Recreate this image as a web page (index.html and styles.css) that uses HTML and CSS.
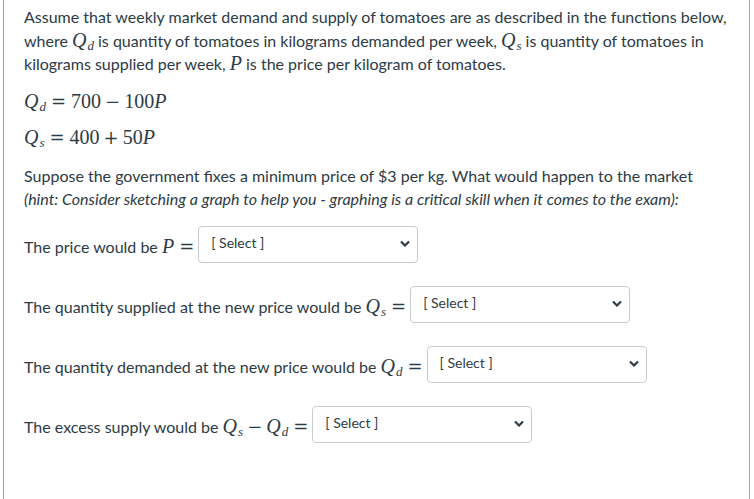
FILE: index.html
```html
<!DOCTYPE html>
<html>
<head>
<meta charset="utf-8">
<link rel="stylesheet" href="styles.css">
</head>
<body>
<div class="card">
  <p class="text">Assume that weekly market demand and supply of tomatoes are as described in the functions below, where <span class="m"><i>Q</i><sub><i>d</i></sub></span> is quantity of tomatoes in kilograms demanded per week, <span class="m"><i>Q</i><sub><i>s</i></sub></span> is quantity of tomatoes in kilograms supplied per week, <span class="m"><i>P</i></span> is the price per kilogram of tomatoes.</p>
  <p class="eq m"><i>Q</i><sub><i>d</i></sub><span class="rel">=</span>700<span class="bin">−</span>100<i>P</i></p>
  <p class="eq m"><i>Q</i><sub><i>s</i></sub><span class="rel">=</span>400<span class="bin">+</span>50<i>P</i></p>
  <p class="text q">Suppose the government fixes a minimum price of $3 per kg. What would happen to the market<br><em>(hint: Consider sketching a graph to help you - graphing is a critical skill when it comes to the exam):</em></p>
  <div class="row first">
    <span class="label">The price would be <span class="m"><i>P</i><span class="rel">=</span></span></span>
    <div class="select"><span class="ph">[ Select ]</span><svg width="10" height="7" viewBox="0 0 10 7"><path d="M1 1.5 L5 5.5 L9 1.5" fill="none" stroke="#2d3b45" stroke-width="2.2"/></svg></div>
  </div>
  <div class="row">
    <span class="label">The quantity supplied at the new price would be <span class="m"><i>Q</i><sub><i>s</i></sub><span class="rel">=</span></span></span>
    <div class="select"><span class="ph">[ Select ]</span><svg width="10" height="7" viewBox="0 0 10 7"><path d="M1 1.5 L5 5.5 L9 1.5" fill="none" stroke="#2d3b45" stroke-width="2.2"/></svg></div>
  </div>
  <div class="row">
    <span class="label">The quantity demanded at the new price would be <span class="m"><i>Q</i><sub><i>d</i></sub><span class="rel">=</span></span></span>
    <div class="select"><span class="ph">[ Select ]</span><svg width="10" height="7" viewBox="0 0 10 7"><path d="M1 1.5 L5 5.5 L9 1.5" fill="none" stroke="#2d3b45" stroke-width="2.2"/></svg></div>
  </div>
  <div class="row">
    <span class="label">The excess supply would be <span class="m"><i>Q</i><sub><i>s</i></sub><span class="bin">−</span><i>Q</i><sub><i>d</i></sub><span class="rel">=</span></span></span>
    <div class="select"><span class="ph">[ Select ]</span><svg width="10" height="7" viewBox="0 0 10 7"><path d="M1 1.5 L5 5.5 L9 1.5" fill="none" stroke="#2d3b45" stroke-width="2.2"/></svg></div>
  </div>
</div>
</body>
</html>
```

FILE: styles.css
```css
html, body {
  margin: 0;
  padding: 0;
  background: #fff;
}
body {
  font-family: Lato, "Open Sans", sans-serif;
  color: #2d3b45;
  font-size: 16px;
}
.card {
  margin-left: 3px;
  width: 724px;
  height: 475px;
  border: 1px solid #a5a5a5;
  border-top: none;
  padding: 5px 1px 20px 20px;
}
.text {
  margin: 0;
  line-height: 23.5px;
}
.m {
  font-family: "Liberation Serif", "DejaVu Serif", serif;
  font-size: 20px;
  line-height: 1;
  white-space: nowrap;
}
.m i {
  font-style: italic;
}
.m sub {
  font-size: 13px;
  vertical-align: -3px;
  line-height: 0;
  margin-left: 1px;
}
.rel, .bin {
  font-family: "DejaVu Serif", serif;
  font-size: 18px;
}
.rel {
  margin: 0 5px;
}
.bin {
  margin: 0 4px;
}
.eq {
  margin: 13px 0 0;
  line-height: 24px;
}
.eq + .eq {
  margin-top: 11px;
}
.q {
  margin-top: 14px;
}
.q em {
  font-style: italic;
}
.row {
  display: flex;
  align-items: center;
  margin-top: 23px;
}
.row.first {
  margin-top: 15px;
}
.label {
  line-height: 24px;
  margin-top: 6px;
}
.label .rel:last-child {
  margin-right: 4px;
}
.select {
  display: flex;
  flex: 0 0 220px;
  align-items: center;
  justify-content: space-between;
  box-sizing: border-box;
  width: 220px;
  height: 37px;
  border: 1px solid #c7cdd1;
  border-radius: 4px;
  padding: 0 7px 2px 12px;
  font-size: 14px;
}
.ph {
  margin-top: -2px;
}
```
